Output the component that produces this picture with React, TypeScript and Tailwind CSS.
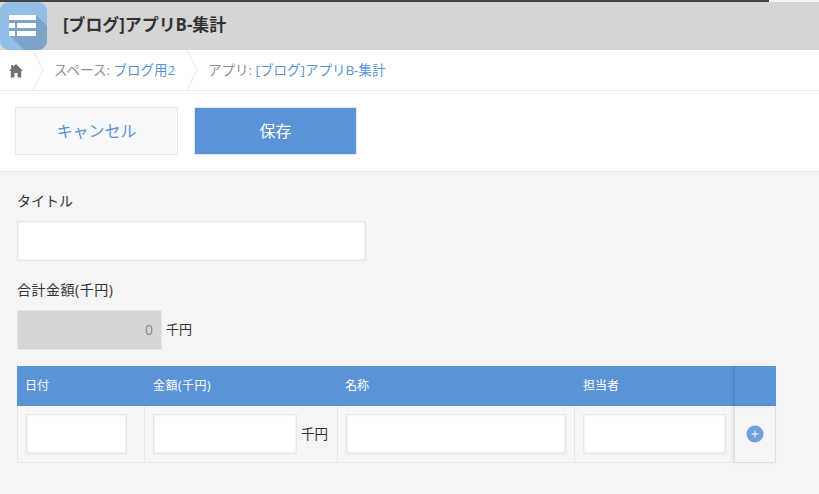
import React from 'react';

const fontStack = 'font-["Open_Sans","Noto_Sans_CJK_JP",sans-serif]';

const AppIcon = () => (
    <svg width="47" height="48" viewBox="0 0 47 48" className="shrink-0">
        <defs>
            <clipPath id="icon-clip">
                <rect width="47" height="48" rx="9" />
            </clipPath>
        </defs>
        <g clipPath="url(#icon-clip)">
            <rect width="47" height="48" fill="#92bfe6" />
            <path d="M36 13L47 24V48H24L9 33V13Z" fill="#7ea3c9" />
            <path d="M9 13H36V18H9ZM9 21H15V26H9ZM17 21H36V26H17ZM9 29H15V34H9ZM17 29H36V34H17Z" fill="#fff" />
        </g>
    </svg>
);

const HomeIcon = () => (
    <svg width="14" height="15" viewBox="0 0 14 15" className="shrink-0">
        <path d="M7 1L14 8H12.2V14.5H8.5V10H5.5V14.5H1.8V8H0L2.2 5.8V2H4.2V3.8Z" fill="#707070" />
    </svg>
);

const Chevron = () => (
    <svg width="12" height="40" viewBox="0 0 12 40" className="shrink-0">
        <path d="M1 0L11 20L1 40" fill="none" stroke="#e3e7e8" strokeWidth="1" />
    </svg>
);

const TextInput = ({ className }: { className: string }) => (
    <div className={`h-10 bg-white border border-[#e3e7e8] shadow-[inset_0_0_3px_#e3e7e8] ${className}`} />
);

const App: React.FC = () => {
    return (
        <div className={`w-[819px] h-[494px] overflow-hidden bg-[#f5f5f5] text-[#333] ${fontStack}`}>
            {/* Top bar */}
            <div className="h-0.5 flex">
                <div className="w-[769px] bg-[#444]" />
                <div className="flex-1 bg-[#f5f5f5]" />
            </div>
            <div className="h-12 bg-[#d4d6d5] flex items-center">
                <AppIcon />
                <span className="ml-4 text-[16.9px] font-bold leading-none mb-0.5">[ブログ]アプリB-集計</span>
            </div>

            {/* Breadcrumb */}
            <div className="h-[41px] bg-white border-b border-[#e3e7e8] flex items-center text-[13.5px]">
                <div className="w-[32px] pl-[9px] shrink-0 flex">
                    <HomeIcon />
                </div>
                <Chevron />
                <div className="w-[142px] pl-[10px] shrink-0 text-[#8f8f8f]">
                    スペース: <span className="text-[#5a93d8]">ブログ用2</span>
                </div>
                <Chevron />
                <div className="pl-[10px] text-[#8f8f8f]">
                    アプリ: <span className="text-[#5a93d8]">[ブログ]アプリB-集計</span>
                </div>
            </div>

            {/* Toolbar */}
            <div className="h-[81px] bg-white border-b border-[#e3e7e8] flex gap-4 pl-[15px] pt-4">
                <button className="w-[163px] h-12 bg-[#f7f9fa] border border-[#e3e7e8] text-base text-[#5a93d8]">キャンセル</button>
                <button className="w-[163px] h-12 bg-[#5b93d7] border border-[#e3e7e8] text-base text-white">保存</button>
            </div>

            {/* Form */}
            <div className="pl-[17px] pt-[19px]">
                <div className="text-sm leading-5">タイトル</div>
                <TextInput className="w-[349px] mt-[10px]" />

                <div className="text-sm leading-5 mt-[19px] tracking-[0.5px]">合計金額(千円)</div>
                <div className="flex items-center mt-[10px]">
                    <div className="w-[145px] h-10 bg-[#d4d6d5] border border-[#e3e7e8] flex items-center justify-end pr-2 text-sm text-[#888]">0</div>
                    <span className="ml-1 text-[13px]">千円</span>
                </div>

                {/* Subtable */}
                <div className="w-[759px] mt-4 text-xs">
                    <div className="h-10 bg-[#5b93d7] text-white flex items-center">
                        <div className="w-[127px] pl-2">日付</div>
                        <div className="w-[193px] pl-[9px] tracking-[0.5px]">金額(千円)</div>
                        <div className="w-[237px] pl-[8px]">名称</div>
                        <div className="w-[160px] pl-[9px]">担当者</div>
                        <div className="w-[42px] h-full border-l border-[#5286c6] shadow-[-2px_0_3px_rgba(0,0,0,0.08)]" />
                    </div>
                    <div className="h-[57px] flex border-b border-[#e3e7e8]">
                        <div className="w-[127px] pl-2 pt-2 border-l border-[#e3e7e8]">
                            <TextInput className="w-[101px]" />
                        </div>
                        <div className="w-[193px] pl-[8px] pt-2 border-l border-[#e3e7e8] flex items-start">
                            <TextInput className="w-[144px]" />
                            <span className="ml-[4px] mt-[12px] text-[13.5px] leading-4">千円</span>
                        </div>
                        <div className="w-[237px] pl-2 pt-2 border-l border-[#e3e7e8]">
                            <TextInput className="w-[220px]" />
                        </div>
                        <div className="w-[160px] pl-2 pt-2 border-l border-[#e3e7e8]">
                            <TextInput className="w-[143px]" />
                        </div>
                        <div className="w-[42px] border-l border-r border-[#dcdfe0] shadow-[-2px_0_3px_rgba(0,0,0,0.08)] flex items-center justify-center">
                            <svg width="18" height="18" viewBox="0 0 18 18">
                                <circle cx="9" cy="9" r="8.5" fill="#6fa0dc" />
                                <path d="M9 5.5V12.5M5.5 9H12.5" stroke="#fff" strokeWidth="1" fill="none" />
                            </svg>
                        </div>
                    </div>
                </div>
            </div>
        </div>
    );
};

export default App;
